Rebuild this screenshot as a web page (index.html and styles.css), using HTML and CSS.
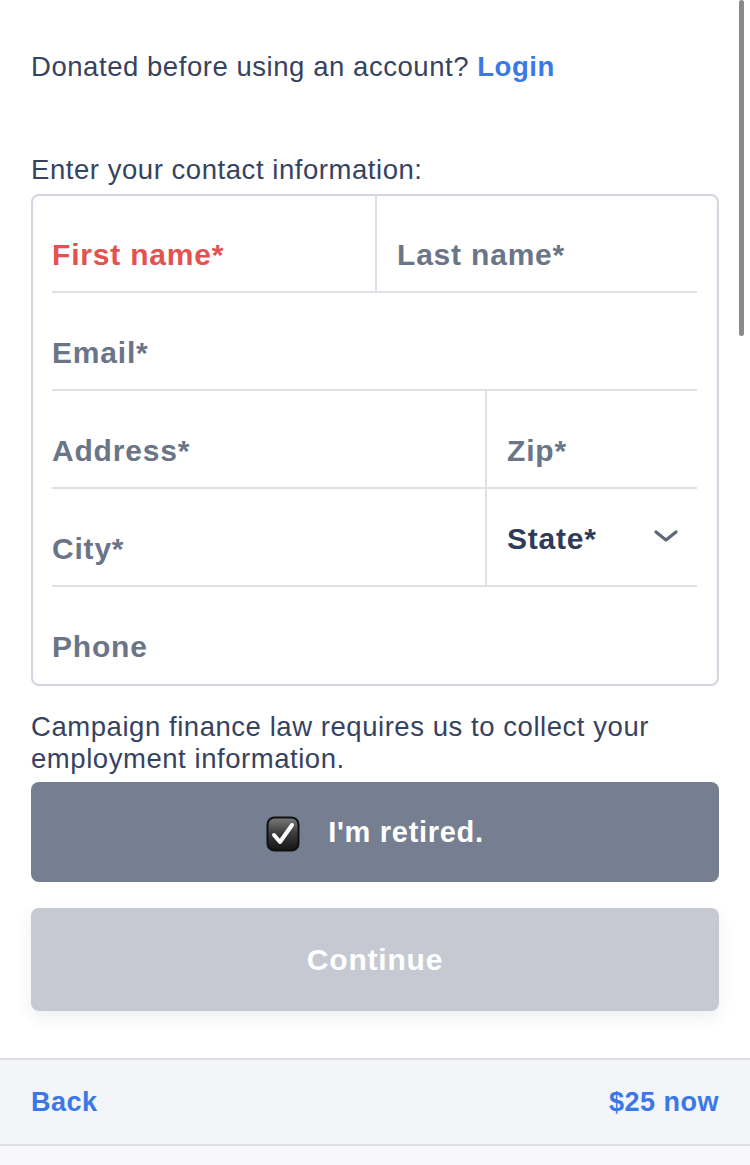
FILE: index.html
```html
<!DOCTYPE html>
<html lang="en">
<head>
    <meta charset="UTF-8">
    <meta name="viewport" content="width=device-width, initial-scale=1.0">
    <title>Contact information</title>
    <link rel="stylesheet" href="styles.css">
</head>
<body>
    <div class="page">
        <p class="login-prompt">Donated before using an account? <a href="#" class="link">Login</a></p>

        <p class="section-label">Enter your contact information:</p>
        <form class="contact-box">
            <div class="field-row halves">
                <input class="field invalid" type="text" placeholder="First name*">
                <input class="field divided" type="text" placeholder="Last name*">
            </div>
            <div class="field-row">
                <input class="field" type="email" placeholder="Email*">
            </div>
            <div class="field-row wide-narrow">
                <input class="field" type="text" placeholder="Address*">
                <input class="field divided" type="text" placeholder="Zip*">
            </div>
            <div class="field-row wide-narrow">
                <input class="field" type="text" placeholder="City*">
                <div class="state-wrap divided">
                    <select class="state-select">
                        <option>State*</option>
                    </select>
                    <svg class="chevron" width="24" height="14" viewBox="0 0 24 14">
                        <path d="M2 3 L12 11 L22 3" fill="none" stroke="#5e6778" stroke-width="3.2" stroke-linecap="round" stroke-linejoin="round"/>
                    </svg>
                </div>
            </div>
            <div class="field-row last">
                <input class="field" type="tel" placeholder="Phone">
            </div>
        </form>

        <p class="notice">Campaign finance law requires us to collect your employment information.</p>

        <button class="retired-btn" type="button">
            <svg class="check" width="34" height="36" viewBox="0 0 34 36">
                <defs>
                    <linearGradient id="boxFill" x1="0" y1="0" x2="0" y2="1">
                        <stop offset="0" stop-color="#7a7a7a"/>
                        <stop offset="0.5" stop-color="#3a3a3a"/>
                        <stop offset="1" stop-color="#151515"/>
                    </linearGradient>
                </defs>
                <rect x="1.5" y="1.5" width="31" height="33" rx="7" fill="url(#boxFill)" stroke="#111" stroke-width="2"/>
                <path d="M8 19 L14 26 L26 9" fill="none" stroke="#fff" stroke-width="4" stroke-linecap="round" stroke-linejoin="round"/>
            </svg>
            <span>I'm retired.</span>
        </button>

        <button class="continue-btn" type="button" disabled>Continue</button>
    </div>

    <footer class="footer-bar">
        <a href="#" class="link">Back</a>
        <a href="#" class="link">$25 now</a>
    </footer>
    <div class="footer-rest"></div>

    <div class="scroll-thumb"></div>
</body>
</html>
```

FILE: styles.css
```css
/* Base Styles */
body {
    font-family: "Liberation Sans", Arial, sans-serif;
    background-color: #fff;
    margin: 0;
    padding: 0;
    color: #36435f;
}

.page {
    padding: 51px 31px 0;
}

p {
    margin: 0;
}

.link {
    color: #3b78e7;
    font-weight: bold;
    text-decoration: none;
}

.login-prompt,
.section-label,
.notice {
    font-size: 27.5px;
    line-height: 32px;
    letter-spacing: 0.55px;
}

.section-label {
    margin-top: 71px;
    margin-bottom: 8px;
}

/* Contact form box */
.contact-box {
    border: 2px solid #d3d6de;
    border-radius: 8px;
    padding: 0 20px 0 19px;
    box-shadow: inset 0 0 6px rgba(0, 0, 0, 0.03);
}

.field-row {
    display: grid;
    grid-template-columns: 1fr;
    height: 96px;
    border-bottom: 2px solid #dfe1e7;
}

.field-row.halves {
    grid-template-columns: 323px 1fr;
    height: 95px;
}

.field-row.wide-narrow {
    grid-template-columns: 433px 1fr;
}

.field-row.last {
    border-bottom: none;
    height: 97px;
}

.field {
    font-family: inherit;
    font-size: 30px;
    font-weight: bold;
    letter-spacing: 0.8px;
    border: none;
    outline: none;
    background: transparent;
    padding: 23px 0 0;
    margin: 0;
    height: 96px;
    box-sizing: border-box;
    color: #36435f;
    min-width: 0;
}

.halves .field {
    height: 95px;
    padding-top: 22px;
}

.last .field {
    height: 97px;
}

.field::placeholder {
    color: #6b7588;
}

.field.invalid::placeholder {
    color: #e4524f;
}

.divided {
    border-left: 2px solid #dfe1e7;
    padding-left: 20px;
}

.halves .divided {
    margin-top: -2px;
    height: 97px;
    padding-top: 24px;
}

.state-wrap {
    position: relative;
}

.state-select {
    -webkit-appearance: none;
    appearance: none;
    font-family: inherit;
    font-size: 30px;
    font-weight: bold;
    letter-spacing: 0.8px;
    color: #2f3b5a;
    background: transparent;
    border: none;
    outline: none;
    padding: 0;
    margin-top: 33px;
    width: 100%;
}

.chevron {
    position: absolute;
    top: 40px;
    right: 19px;
}

.notice {
    margin-top: 25px;
}

/* Buttons */
.retired-btn {
    display: flex;
    justify-content: center;
    align-items: center;
    gap: 28px;
    width: 100%;
    height: 100px;
    margin-top: 7px;
    border: none;
    border-radius: 8px;
    background-color: #757f91;
    color: #fff;
    font-family: inherit;
    font-size: 29px;
    font-weight: bold;
    letter-spacing: 0.7px;
    padding: 0;
}

.check {
    margin-top: 4px;
}

.continue-btn {
    display: block;
    width: 100%;
    height: 103px;
    margin-top: 26px;
    border: none;
    border-radius: 8px;
    background-color: #c6c9d1;
    color: #fff;
    font-family: inherit;
    font-size: 30px;
    font-weight: bold;
    letter-spacing: 0.8px;
    box-shadow: 0 6px 16px rgba(30, 40, 60, 0.08);
}

/* Footer */
.footer-bar {
    display: flex;
    justify-content: space-between;
    align-items: center;
    margin-top: 47px;
    height: 84px;
    padding: 0 31px;
    background-color: #f4f5f9;
    border-top: 2px solid #dcdee4;
    border-bottom: 2px solid #dcdee4;
    font-size: 27px;
    letter-spacing: 0.5px;
}

.footer-rest {
    height: 40px;
    background-color: #f8f8fa;
}

.scroll-thumb {
    position: fixed;
    top: 0;
    right: 6px;
    width: 5px;
    height: 336px;
    border-radius: 3px;
    background-color: #8a8a8a;
}
```
